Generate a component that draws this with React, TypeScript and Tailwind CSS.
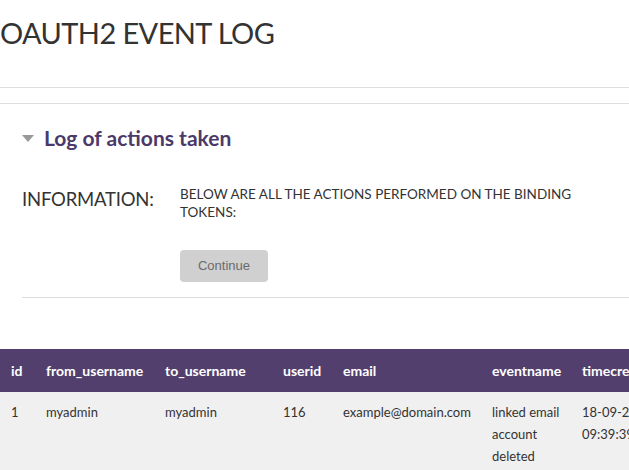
const rows = [
  {
    id: "1",
    from: "myadmin",
    to: "myadmin",
    userid: "116",
    email: "example@domain.com",
    event: ["linked email", "account", "deleted"],
    time: ["18-09-2021", "09:39:39"],
  },
];

const cols = "grid grid-cols-[35px_119px_118px_60px_149px_90px_120px]";

export default function App() {
  return (
    <div className="h-[470px] w-[629px] overflow-hidden bg-white font-['Lato',sans-serif] text-[#333]">
      <h1 className="pt-[15px] text-[29px] leading-[36px] tracking-[-0.6px]">OAUTH2 EVENT LOG</h1>

      <div className="mt-[36px] border-t border-[#dedede]" />
      <div className="mt-[15px] border-t border-[#dedede]" />

      <div className="pl-[22px]">
        <div className="mt-[20px] flex items-center gap-[10px]">
          <svg width="12" height="7" viewBox="0 0 12 7" className="mt-[1px]">
            <path d="M0 0h12L6 7z" fill="#999" />
          </svg>
          <h2 className="text-[21px] font-bold leading-[28px] text-[#4b3a69]">Log of actions taken</h2>
        </div>

        <div className="mt-[33px] flex">
          <div className="w-[158px] pt-[2px] text-[18.5px] leading-[24px] tracking-[-0.2px]">INFORMATION:</div>
          <div className="w-[410px] text-[13.5px] leading-[18px]">
            BELOW ARE ALL THE ACTIONS PERFORMED ON THE BINDING TOKENS:
          </div>
        </div>

        <div className="mt-[29px] pl-[158px]">
          <button className="h-[32px] w-[88px] rounded-[4px] bg-[#d0d0d0] font-['Liberation_Sans',sans-serif] text-[13px] text-[#6b6b6b]">
            Continue
          </button>
        </div>

        <div className="mt-[15px] border-t border-[#dedede]" />
      </div>

      <div className="mt-[51px]">
        <div className={`${cols} h-[43px] items-center bg-[#523f6d] text-[14px] font-bold text-white`}>
          <div className="pl-[11px]">id</div>
          <div className="pl-[11px]">from_username</div>
          <div className="pl-[11px]">to_username</div>
          <div className="pl-[11px]">userid</div>
          <div className="pl-[11px]">email</div>
          <div className="pl-[11px]">eventname</div>
          <div className="pl-[11px] whitespace-nowrap">timecreated</div>
        </div>
        {rows.map((r) => (
          <div key={r.id} className={`${cols} bg-[#f0f0f0] pt-[9px] pb-[10px] text-[13px] leading-[22px]`}>
            <div className="pl-[11px]">{r.id}</div>
            <div className="pl-[11px]">{r.from}</div>
            <div className="pl-[11px]">{r.to}</div>
            <div className="pl-[11px]">{r.userid}</div>
            <div className="pl-[11px]">{r.email}</div>
            <div className="pl-[11px]">
              {r.event.map((e) => (
                <div key={e}>{e}</div>
              ))}
            </div>
            <div className="pl-[11px] whitespace-nowrap">
              {r.time.map((t) => (
                <div key={t}>{t}</div>
              ))}
            </div>
          </div>
        ))}
      </div>
    </div>
  );
}
